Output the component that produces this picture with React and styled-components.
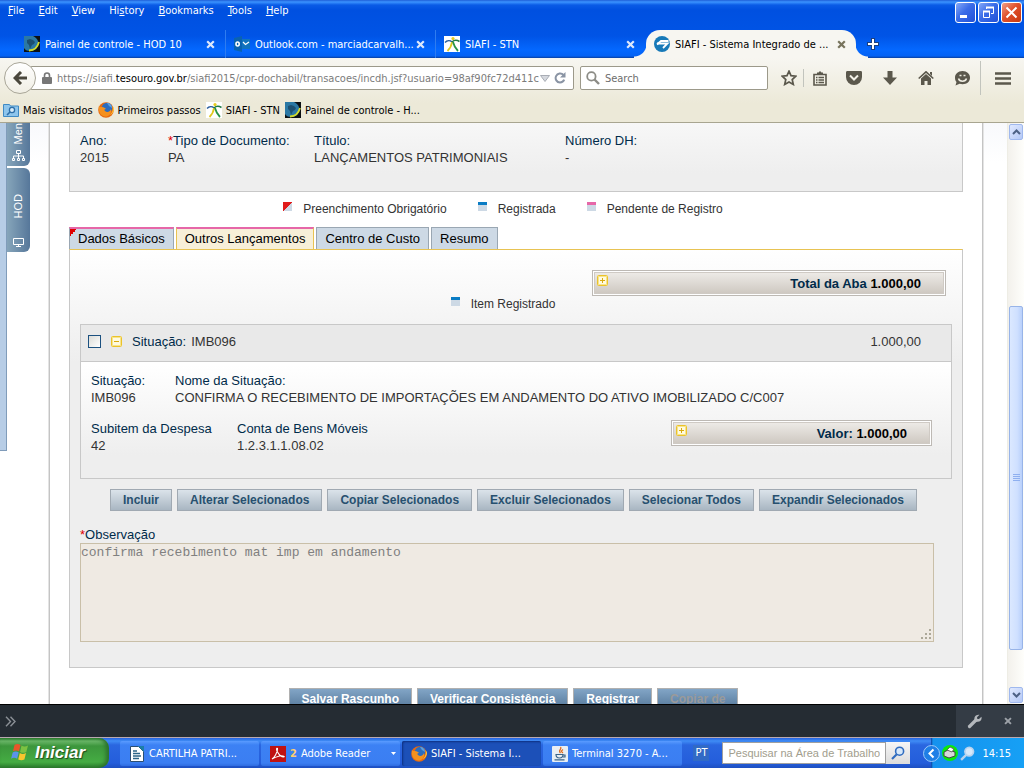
import React from 'react';
import styled, { createGlobalStyle, css } from 'styled-components';

const ui = '"DejaVu Sans Condensed", "Liberation Sans", sans-serif';
const arial = '"Liberation Sans", Arial, sans-serif';

const GlobalStyle = createGlobalStyle`
  * {
    box-sizing: border-box;
  }

  body {
    margin: 0;
    overflow: hidden;
    background: #fff;
    font-family: ${arial};
    font-size: 13px;
    line-height: 17px;
    color: #333;
  }

  button, input, textarea {
    margin: 0;
    font: inherit;
  }

  svg {
    display: block;
    flex: none;
  }
`;

const Window = styled.div`
  display: flex;
  flex-direction: column;
  height: 100vh;
`;

/* browser chrome */

const TitleBar = styled.header`
  flex: none;
  font-family: ${ui};
  font-size: 11px;
  color: #fff;
  background: linear-gradient(#1f5fd8 0, #3b93ff 2px, #0a5be6 5px, #0050e0 10px, #0054e6 36px, #0468ff 50px, #0462f4 56px, #0a3fa0 58px);
`;

const MenuRow = styled.div`
  display: flex;
  align-items: flex-start;
  height: 30px;
  padding: 2px 2px 0 8px;
`;

const MenuBar = styled.nav`
  display: flex;
  flex: 1;
  gap: 14px;
`;

const MenuItem = styled.button`
  padding: 0;
  border: 0;
  background: none;
  color: #fff;
  line-height: 17px;
`;

const WindowButtons = styled.div`
  display: flex;
  gap: 2px;
`;

const WindowButton = styled.button`
  display: flex;
  align-items: center;
  justify-content: center;
  width: 21px;
  height: 21px;
  padding: 0;
  border: 1px solid #fff;
  border-radius: 3px;
  background: ${p => p.$close
    ? 'linear-gradient(135deg, #f0a088, #e0502c 45%, #c83a10)'
    : 'linear-gradient(135deg, #84a8f8, #3a6ce8 45%, #2050d8)'};
`;

const TabRow = styled.div`
  display: flex;
  height: 28px;
  padding-left: 16px;
`;

const BrowserTab = styled.div`
  position: relative;
  display: flex;
  align-items: center;
  gap: 5px;
  flex: 0 1 210px;
  min-width: 0;
  padding: 0 10px 0 8px;
  border-right: 1px solid ${p => p.$last ? 'transparent' : '#2f7cf0'};

  ${p => p.$active && css`
    border: 0;
    border-radius: 14px 14px 0 0;
    background: #f7f6f1;
    color: #000;

    &::before, &::after {
      content: '';
      position: absolute;
      bottom: 0;
      width: 12px;
      height: 14px;
    }

    &::before {
      left: -12px;
      background: radial-gradient(circle at 0 0, transparent 12px, #f7f6f1 13px);
    }

    &::after {
      right: -12px;
      background: radial-gradient(circle at 100% 0, transparent 12px, #f7f6f1 13px);
    }
  `}
`;

const TabTitle = styled.span`
  flex: 1;
  min-width: 0;
  white-space: nowrap;
`;

const IconButton = styled.button`
  display: flex;
  align-items: center;
  align-self: center;
  justify-content: center;
  flex: none;
  width: ${p => p.$width || 10}px;
  height: 24px;
  padding: 0;
  border: 0;
  background: none;
  color: ${p => p.$color || 'inherit'};
`;

const Toolbars = styled.div`
  flex: none;
  font-family: ${ui};
  font-size: 11px;
  color: #000;
  background: linear-gradient(#f7f6f1, #ece9d8 45px);
  border-bottom: 1px solid #a8a590;
`;

const NavBar = styled.div`
  display: flex;
  align-items: center;
  height: 40px;
  padding-left: 4px;
  color: #5b584c;
`;

const BackButton = styled.button`
  display: flex;
  align-items: center;
  justify-content: center;
  z-index: 1;
  width: 32px;
  height: 32px;
  margin-right: -6px;
  padding: 0;
  border: 1px solid #a9a698;
  border-radius: 50%;
  background: linear-gradient(#fff, #f0eee4);
  color: #4a473c;
`;

const UrlBar = styled.div`
  display: flex;
  align-items: center;
  flex: 545 1 0;
  min-width: 0;
  height: 24px;
  padding: 0 3px 0 11px;
  border: 1px solid #9c998a;
  border-radius: 2px;
  background: #fff;
`;

const Url = styled.div`
  flex: 1;
  min-width: 0;
  margin: 0 1px 0 5px;
  overflow: hidden;
  white-space: nowrap;
  color: #7b7b7b;
  outline: 0;
`;

const Domain = styled.span`
  color: #000;
`;

const SearchBar = styled.label`
  display: flex;
  align-items: center;
  gap: 5px;
  flex: 187 1 0;
  min-width: 0;
  height: 24px;
  margin: 0 7px 0 6px;
  padding-left: 5px;
  border: 1px solid #9c998a;
  border-radius: 2px;
  background: #fff;
`;

const SearchInput = styled.input`
  flex: 1;
  min-width: 0;
  padding: 0;
  border: 0;
  outline: 0;
  background: none;

  &::placeholder {
    color: #6d6d6d;
    opacity: 1;
  }
`;

const Separator = styled.div`
  flex: none;
  width: 1px;
  height: ${p => p.$height}px;
  background: #c2c4bd;
`;

const Bookmarks = styled.nav`
  display: flex;
  align-items: center;
  gap: 5px;
  height: 24px;
  padding-left: 3px;
`;

const Bookmark = styled.a`
  display: flex;
  align-items: center;
  gap: 4px;
  color: #000;
  text-decoration: none;
  white-space: nowrap;
`;

/* page */

const Viewport = styled.div`
  display: flex;
  flex: 1;
  min-height: 0;
  overflow: hidden;
`;

const SideBar = styled.aside`
  display: flex;
  flex: none;
  width: 48px;
  background: linear-gradient(#f8f9fc, #fff 40px);
`;

const SideStrip = styled.div`
  width: 7px;
  height: 328px;
  border: 1px solid #809cba;
  border-width: 0 1px 1px 0;
  background: #b7cde6;
`;

const SideTabs = styled.div`
  display: flex;
  flex-direction: column;
  gap: 2px;
`;

const SideTab = styled.button`
  display: flex;
  flex-direction: column;
  align-items: center;
  justify-content: flex-end;
  gap: ${p => p.$gap}px;
  width: 23px;
  height: ${p => p.$height}px;
  padding: 0 0 5px;
  overflow: hidden;
  border: 0;
  border-radius: ${p => p.$cut ? '0 0 6px 0' : '0 6px 6px 0'};
  background: linear-gradient(90deg, #86a5ba, #56779a);
  color: #fff;
  font-size: 11px;
`;

const SideLabel = styled.span`
  writing-mode: vertical-rl;
  transform: rotate(180deg);
`;

const Page = styled.main`
  flex: 1;
  min-width: 0;
  padding: 0 19px;
  border: 1px solid #e4e4e4;
  border-width: 0 1px;
  box-shadow: inset 1px 0 #c4c4c4, inset -1px 0 #c4c4c4;
  padding: 0 20px;
`;

const DocPanel = styled.section`
  display: grid;
  grid-template-columns: 88px 146px 251px 1fr;
  height: 69px;
  padding: 9px 10px 0;
  border: 1px solid #c8c8c8;
  border-top: 0;
  background: linear-gradient(#f7f7f7, #eee 50px);
`;

const Label = styled.div`
  color: #002b4a;
`;

const Required = styled.span`
  color: #e00000;
`;

const Legend = styled.div`
  display: flex;
  justify-content: center;
  gap: 31px;
  padding-right: 26px;
  font-size: 12px;
`;

const PageLegend = styled(Legend)`
  height: 35px;
  padding-top: 9px;
`;

const PanelLegend = styled(Legend)`
  height: 16px;
  margin-bottom: 12px;
`;

const LegendItem = styled.div`
  display: flex;
  gap: 11px;
`;

const Mark = styled.i`
  width: 9px;
  height: 9px;
  margin-top: 1px;
  background: ${p => p.$corner
    ? 'linear-gradient(135deg, #e01b1b 50%, #cdd9e5 50%)'
    : `linear-gradient(${p.$color} 3px, #cdd9e5 3px)`};
`;

const FormTabs = styled.div`
  display: flex;
  gap: 2px;
  height: 22px;
`;

const FormTab = styled.button`
  position: relative;
  height: 22px;
  padding: 0 8px;
  border: 1px solid ${p => p.$active ? '#e8c352' : '#9aa7b3'};
  border-bottom: 0;
  border-top: ${p => p.$pending ? '2px solid #e667a8' : '1px solid #9aa7b3'};
  background: ${p => p.$active ? '#f7efd8' : '#cdd9e5'};
  color: #000;
  line-height: 18px;
  white-space: nowrap;
`;

const Corner = styled.i`
  position: absolute;
  top: 0;
  left: 0;
  width: 7px;
  height: 7px;
  background: linear-gradient(135deg, #e00000 50%, transparent 50%);
`;

const Panel = styled.section`
  height: 419px;
  padding: 20px 10px 0;
  border: 1px solid #c8c8c8;
  border-top-color: #e8c352;
  background: linear-gradient(#fff, #eee 112px);
`;

const AmountBox = styled.div`
  display: flex;
  flex: none;
  width: ${p => p.$width}px;
  height: 26px;
  margin-left: auto;
  margin-right: ${p => p.$right}px;
  padding: 1px;
  border: 1px solid #bdb9b4;
  background: #fff;
`;

const AmountInner = styled.div`
  display: flex;
  flex: 1;
  align-items: flex-start;
  justify-content: space-between;
  padding: 2px 22px 0 2px;
  border: 1px solid #cfcac4;
  background: linear-gradient(#edeae6, #cfc9c2);
  font-weight: bold;
  color: #000;
`;

const AmountLabel = styled.span`
  color: #002b4a;
`;

const Toggle = styled.button`
  display: flex;
  padding: 0;
  border: 0;
  background: none;
`;

const Item = styled.article`
  border: 1px solid #c8c8c8;
  background: linear-gradient(#fff 40px, #eee 130px);
`;

const ItemHeader = styled.div`
  display: flex;
  align-items: center;
  gap: 10px;
  height: 37px;
  padding: 0 30px 4px 7px;
  border-bottom: 1px solid #c8c8c8;
  background: #e9e9e9;
`;

const ItemTitle = styled.div`
  flex: 1;
  display: flex;
  gap: 5px;
`;

const Check = styled.input`
  appearance: none;
  width: 13px;
  height: 13px;
  border: 1px solid #1c5180;
  background: linear-gradient(135deg, #dcdcd7, #fff);
`;

const ItemBody = styled.div`
  display: flex;
  flex-direction: column;
  gap: 14px;
  padding: 10px 19px 24px 10px;
`;

const FieldRow = styled.div`
  display: flex;
`;

const Field = styled.div`
  min-width: ${p => p.$width || 0}px;
  white-space: nowrap;
`;

const ButtonRow = styled.div`
  display: flex;
  justify-content: center;
  gap: 5px;
  padding-right: 5px;
`;

const ItemActions = styled(ButtonRow)`
  margin: 10px 0 15px;
`;

const PageActions = styled(ButtonRow)`
  margin-top: 20px;
`;

const Button = styled.button`
  height: 22px;
  padding: 0 12px;
  border: 1px solid #a0a9b2;
  background: linear-gradient(#dbe3ea, #a9b6c2);
  color: #27506f;
  font-size: 12px;
  font-weight: bold;
  white-space: nowrap;
`;

const PrimaryButton = styled(Button)`
  border-color: #b0b0b0;
  background: linear-gradient(#82a5c6, #55789a);
  color: #fff;

  &:disabled {
    color: #9a9a9a;
  }
`;

const NoteLabel = styled.label`
  display: block;
  color: #002b4a;
`;

const Note = styled.textarea`
  display: block;
  width: calc(100% - 18px);
  height: 99px;
  padding: 0;
  border: 1px solid #c9bfa8;
  outline: 0;
  background: #efeae3;
  color: #808080;
  font-family: "Liberation Mono", "Courier New", monospace;
  font-size: 13px;
  line-height: 17px;
  resize: both;

  &::-webkit-resizer {
    background:
      linear-gradient(#aca899, #aca899) 11px 3px / 2px 2px no-repeat,
      linear-gradient(#aca899, #aca899) 7px 7px / 2px 2px no-repeat,
      linear-gradient(#aca899, #aca899) 11px 7px / 2px 2px no-repeat,
      linear-gradient(#aca899, #aca899) 3px 11px / 2px 2px no-repeat,
      linear-gradient(#aca899, #aca899) 7px 11px / 2px 2px no-repeat,
      linear-gradient(#aca899, #aca899) 11px 11px / 2px 2px no-repeat;
  }
`;

const Gutter = styled.div`
  flex: none;
  width: 23px;
  background: linear-gradient(#f8f9fc, #fff 40px);
`;

const ScrollBar = styled.div`
  display: flex;
  flex: none;
  flex-direction: column;
  width: 17px;
  padding: 1px 1px;
  border-left: 1px solid #eeede5;
  background: linear-gradient(90deg, #f3f1ec, #fefefb);
`;

const ScrollButton = styled.button`
  display: flex;
  align-items: center;
  justify-content: center;
  height: 16px;
  padding: 0;
  border: 1px solid #9fb8ee;
  border-radius: 2px;
  background: linear-gradient(135deg, #e0e9ff, #b4c8f6);
  color: #4d6185;
`;

const ScrollSpace = styled.div`
  flex: ${p => p.$grow} 1 0;
`;

const ScrollThumb = styled.div`
  display: flex;
  align-items: center;
  justify-content: center;
  flex: 343 1 0;
  border: 1px solid #98b4e8;
  border-radius: 2px;
  background: linear-gradient(90deg, #dbe8ff, #cfe0ff 60%, #b9d0fb);
`;

/* developer toolbar and taskbar */

const DevToolbar = styled.div`
  display: flex;
  flex: none;
  align-items: stretch;
  justify-content: space-between;
  height: 34px;
  border-top: 1px solid #000;
  border-bottom: 1px solid #b9a9b0;
  background: #252c33;
  color: #9da2a8;
`;

const DevTools = styled.div`
  display: flex;
  align-items: center;
  width: 68px;
  background: #343c45;
`;

const TaskBar = styled.footer`
  display: flex;
  align-items: stretch;
  flex: none;
  height: 30px;
  font-family: ${ui};
  font-size: 11px;
  color: #fff;
  background: linear-gradient(#2663e0, #3f8cf5 3px, #2a66e0 7px, #245ddb 25px, #1d4fc0);
`;

const StartButton = styled.button`
  display: flex;
  align-items: center;
  gap: 5px;
  width: 109px;
  margin-right: 11px;
  padding: 0 0 2px 11px;
  border: 0;
  border-radius: 0 10px 10px 0;
  background: linear-gradient(#2e8430, #6cb86a 3px, #3c963c 8px, #45ac43 24px, #2a7d2c);
  box-shadow: inset -3px 0 4px #2b6f2c;
  color: #fff;
  font-family: ${arial};
  font-size: 17px;
  font-style: italic;
  font-weight: bold;
  text-shadow: 1px 1px 1px #1e4a1e;
`;

const Tasks = styled.div`
  display: flex;
  flex: 1;
  gap: 2px;
  min-width: 0;
  padding: 3px 0 2px;
`;

const Task = styled.button`
  display: flex;
  align-items: center;
  gap: 4px;
  flex: 0 1 139px;
  min-width: 0;
  padding: 0 4px 0 9px;
  border: 0;
  border-radius: 2px;
  background: ${p => p.$active ? '#1c50b8' : 'linear-gradient(#5a9bff, #3c81f4 4px, #3b7ef2 22px, #2f6ce0)'};
  box-shadow: ${p => p.$active ? 'inset 1px 1px 2px #0e2f80' : 'none'};
  color: #fff;
  text-align: left;
`;

const TaskTitle = styled.span`
  flex: 1;
  overflow: hidden;
  white-space: nowrap;
`;

const TaskCount = styled.b`
  color: #ffcf70;
`;

const Language = styled.button`
  align-self: center;
  height: 16px;
  margin: 0 13px 0 7px;
  padding: 0 2px;
  border: 0;
  background: #316ac5;
  color: #fff;
  line-height: 16px;
`;

const DeskSearch = styled.form`
  display: flex;
  align-self: center;
  height: 22px;
  margin-right: 13px;
`;

const DeskInput = styled(SearchInput)`
  flex: none;
  width: 164px;
  padding: 0 5px;
  border: 1px solid #a0a0a0;
  background: #fff;
  font-family: ${arial};

  &::placeholder {
    color: #a19d8d;
  }
`;

const DeskButton = styled.button`
  display: flex;
  align-items: center;
  justify-content: center;
  width: 24px;
  padding: 0;
  border: 0;
  background: linear-gradient(#f6f6f6, #dcdcdc);
`;

const Tray = styled.div`
  display: flex;
  align-items: center;
  gap: 2px;
  padding-right: 13px;
  background: linear-gradient(90deg, transparent 8px, #0f3f9e 8px, #1592ee 10px, #16a0f5 100%);
`;

const Clock = styled.time`
  margin-left: 5px;
`;

/* drawings */

const Close = ({ size = 9 }) => (
  <svg width={size} height={size} viewBox="0 0 9 9">
    <path d="M1.2 1.2l6.6 6.6M7.8 1.2L1.2 7.8" stroke="currentColor" strokeWidth="2.2" />
  </svg>
);

const HodIcon = () => (
  <svg width="16" height="16" viewBox="0 0 16 16">
    <rect width="16" height="16" fill="#0c1014" />
    <path d="M0 0h9c4 2 6 5 5 9-1 4-4 6-8 6-3 0-5-1-6-3z" fill="#2b78a4" />
    <path d="M3 4l3-1 3 1 2 2-1 2-2 1-2 4-1-4-2-2z" fill="#1c4f70" />
    <path d="M5 14.500c5 0 8.500-3 10-8.500" fill="none" stroke="#d4dc2a" strokeWidth="1.800" />
  </svg>
);

const OutlookIcon = () => (
  <svg width="16" height="16" viewBox="0 0 16 16">
    <path d="M7 3h9v10H7z" fill="#1173bd" />
    <path d="M9 6l2.5 2.5L15 6" fill="none" stroke="#fff" strokeWidth="1.2" />
    <path d="M0 2l8-2v16l-8-2z" fill="#0a62b0" />
    <ellipse cx="3.6" cy="8" rx="1.6" ry="2" fill="none" stroke="#fff" strokeWidth="1.6" />
  </svg>
);

const StnIcon = () => (
  <svg width="16" height="16" viewBox="0 0 16 16">
    <rect width="16" height="16" fill="#fff" />
    <path d="M1 6.500c2-2 5-2.500 7-.5" fill="none" stroke="#2b5f9e" strokeWidth="1.400" />
    <path d="M8 6c2-2 5-2 7.500-.500" fill="none" stroke="#1f7a44" strokeWidth="1.600" />
    <path d="M8 6c-.5 4-2 6.500-4.500 9" fill="none" stroke="#e0c81c" strokeWidth="1.800" />
    <path d="M9 6c1 4 2.500 6.500 5 9" fill="none" stroke="#279447" strokeWidth="1.800" />
    <circle cx="9" cy="2.600" r="1.600" fill="#e8cc20" />
  </svg>
);

const SerproIcon = () => (
  <svg width="16" height="16" viewBox="0 0 16 16">
    <circle cx="8" cy="8" r="8" fill="#1779b8" />
    <path d="M14.500 5H7L3 8.500" fill="none" stroke="#fff" strokeWidth="1.800" />
    <path d="M3 7.500h10.500L9 12" fill="none" stroke="#fff" strokeWidth="1.800" />
  </svg>
);

const FirefoxIcon = () => (
  <svg width="16" height="16" viewBox="0 0 16 16">
    <circle cx="8" cy="8" r="7.8" fill="#e66a12" />
    <circle cx="9" cy="6" r="5.2" fill="#2a6cc0" />
    <path d="M9 1c3 0 5 2 5 5l-3-2z" fill="#5aa0e0" />
    <path d="M1 3c0 2 1 2 3 2 2 0 3 1 4 2-2 0-2 1-1 2 2 2 5 1 6-2 1 5-3 8-6 7.500C2 14 0 9 1 3z" fill="#f5911e" />
    <path d="M14.500 4c1 4 0 7-3 9 3-1 5-4 4.300-7z" fill="#ffcf3a" />
  </svg>
);

const FolderIcon = () => (
  <svg width="16" height="16" viewBox="0 0 16 16">
    <path d="M.5 2.500h6l1 1.500h8v10.500H.5z" fill="#8ec5ec" stroke="#3f8ac4" />
    <circle cx="9" cy="8" r="2.600" fill="#d8ecfa" stroke="#2f6fa8" strokeWidth="1.300" />
    <path d="M7 10l-3 3" stroke="#2f6fa8" strokeWidth="1.600" />
  </svg>
);

const Magnifier = ({ size = 14, color = '#8c8c86', flip }) => (
  <svg width={size} height={size} viewBox="0 0 14 14">
    {flip
      ? (
        <>
          <path d="M6 8l-5 5" stroke={color} strokeWidth="2.200" />
          <circle cx="8.600" cy="5.200" r="4" fill="#d6e8fa" stroke={color} strokeWidth="1.600" />
        </>
      )
      : (
        <>
          <circle cx="5.400" cy="5.400" r="4.200" fill="none" stroke={color} strokeWidth="1.800" />
          <path d="M8.500 8.500l4.500 4.500" stroke={color} strokeWidth="2.400" />
        </>
      )}
  </svg>
);

const Expand = ({ open }) => (
  <svg width="11" height="11" viewBox="0 0 11 11">
    <rect x=".5" y=".5" width="10" height="10" rx="1" fill="#fffbe0" stroke="#ebc32a" />
    <rect x="1.500" y="1.500" width="8" height="8" fill="none" stroke="#f7e48c" />
    <path d={open ? 'M3 5.500h5' : 'M3 5.500h5M5.500 3v5'} stroke="#d9aa10" />
  </svg>
);

const Chevron = ({ down }) => (
  <svg width="9" height="6" viewBox="0 0 9 6">
    <path d={down ? 'M1 1l3.500 3.500L8 1' : 'M1 5l3.500-3.500L8 5'} fill="none" stroke="currentColor" strokeWidth="2" />
  </svg>
);

const browserTabs = [
  { title: 'Painel de controle - HOD 10', icon: <HodIcon /> },
  { title: 'Outlook.com - marciadcarvalh...', icon: <OutlookIcon /> },
  { title: 'SIAFI - STN', icon: <StnIcon />, last: true },
  { title: 'SIAFI - Sistema Integrado de ...', icon: <SerproIcon />, active: true },
];

const bookmarks = [
  { title: 'Mais visitados', icon: <FolderIcon /> },
  { title: 'Primeiros passos', icon: <FirefoxIcon /> },
  { title: 'SIAFI - STN', icon: <StnIcon /> },
  { title: 'Painel de controle - H...', icon: <HodIcon /> },
];

const itemActions = [
  'Incluir',
  'Alterar Selecionados',
  'Copiar Selecionados',
  'Excluir Selecionados',
  'Selecionar Todos',
  'Expandir Selecionados',
];

const BrowserTitle = () => (
  <TitleBar>
    <MenuRow>
      <MenuBar>
        <MenuItem><u>F</u>ile</MenuItem>
        <MenuItem><u>E</u>dit</MenuItem>
        <MenuItem><u>V</u>iew</MenuItem>
        <MenuItem>Hi<u>s</u>tory</MenuItem>
        <MenuItem><u>B</u>ookmarks</MenuItem>
        <MenuItem><u>T</u>ools</MenuItem>
        <MenuItem><u>H</u>elp</MenuItem>
      </MenuBar>
      <WindowButtons>
        <WindowButton aria-label="Minimize">
          <svg width="13" height="13"><path d="M1 9h7v3H1z" fill="#fff" /></svg>
        </WindowButton>
        <WindowButton aria-label="Restore">
          <svg width="13" height="13" fill="none" stroke="#fff">
            <path d="M4.500 3V1.500h7v6H9" />
            <path d="M4 1.500h8" strokeWidth="2" />
            <path d="M1.500 5.500h6v6h-6z" />
            <path d="M1 5.500h7" strokeWidth="2" />
          </svg>
        </WindowButton>
        <WindowButton $close aria-label="Close">
          <svg width="13" height="13"><path d="M1.500 1.500l10 10M11.500 1.500l-10 10" stroke="#fff" strokeWidth="2" /></svg>
        </WindowButton>
      </WindowButtons>
    </MenuRow>
    <TabRow>
      {browserTabs.map(tab => (
        <BrowserTab key={tab.title} $active={tab.active} $last={tab.last}>
          {tab.icon}
          <TabTitle>{tab.title}</TabTitle>
          <IconButton aria-label="Close tab" $color={tab.active ? '#77735c' : '#dfe9fb'}><Close /></IconButton>
        </BrowserTab>
      ))}
      <IconButton $width={34} aria-label="New tab">
        <svg width="12" height="12" viewBox="0 0 12 12">
          <path d="M6 0v12M0 6h12" stroke="#1a3f80" strokeWidth="4" />
          <path d="M6 1v10M1 6h10" stroke="#fff" strokeWidth="2" />
        </svg>
      </IconButton>
    </TabRow>
  </TitleBar>
);

const BrowserBars = () => (
  <Toolbars>
    <NavBar>
      <BackButton aria-label="Back">
        <svg width="15" height="14" viewBox="0 0 15 14">
          <path d="M8 1L2 7l6 6M2.500 7H14" fill="none" stroke="currentColor" strokeWidth="3" />
        </svg>
      </BackButton>
      <UrlBar>
        <svg width="10" height="12" viewBox="0 0 10 12">
          <path d="M2.500 6V3.500a2.500 2.500 0 015 0V6" fill="none" stroke="#777" strokeWidth="1.600" />
          <rect y="5" width="10" height="7" rx="1" fill="#777" />
        </svg>
        <Url role="textbox" aria-label="Address" contentEditable suppressContentEditableWarning>
          https://siafi.<Domain>tesouro.gov.br</Domain>/siafi2015/cpr-dochabil/transacoes/incdh.jsf?usuario=98af90fc72d411c
        </Url>
        <svg width="10" height="7" viewBox="0 0 10 7"><path d="M.5.5h9L5 6.500z" fill="#d5d8de" stroke="#a9adb5" /></svg>
        <IconButton $width={20} aria-label="Reload">
          <svg width="12" height="12" viewBox="0 0 12 12">
            <path d="M9.500 3A4.500 4.500 0 106 10.500c2 0 3.500-1 4.200-2.800" fill="none" stroke="#8a94a4" strokeWidth="2" />
            <path d="M11.500 0v5.500H6z" fill="#8a94a4" />
          </svg>
        </IconButton>
      </UrlBar>
      <SearchBar>
        <Magnifier />
        <SearchInput placeholder="Search" aria-label="Search" />
      </SearchBar>
      <IconButton $width={28} aria-label="Bookmark this page">
        <svg width="16" height="16" viewBox="0 0 16 16">
          <path d="M8 1.200l2 4.500 4.800.5-3.600 3.300 1.100 4.900L8 11.900l-4.300 2.500 1.100-4.900L1.200 6.200 6 5.700z" fill="none" stroke="currentColor" strokeWidth="1.700" />
        </svg>
      </IconButton>
      <Separator $height={18} />
      <IconButton $width={32} aria-label="Bookmarks">
        <svg width="14" height="15" viewBox="0 0 14 15">
          <path d="M1 3.500h12V14H1z" fill="none" stroke="currentColor" strokeWidth="1.600" />
          <path d="M4 3V1.500h1.500L7 0l1.500 1.500H10V3z" fill="currentColor" />
          <path d="M3 6.500h1.500M5.500 6.500H11M3 9h1.500M5.500 9H11M3 11.500h1.500M5.500 11.500H11" stroke="currentColor" strokeWidth="1.300" />
        </svg>
      </IconButton>
      <IconButton $width={36} aria-label="Save to Pocket">
        <svg width="16" height="14" viewBox="0 0 16 14">
          <path d="M1.500 0h13C15.500 0 16 .5 16 1.500V6a8 8 0 01-16 0V1.500C0 .5.500 0 1.500 0z" fill="currentColor" />
          <path d="M4 4.500L8 8.500l4-4" fill="none" stroke="#f3f1e8" strokeWidth="2" />
        </svg>
      </IconButton>
      <IconButton $width={36} aria-label="Downloads">
        <svg width="14" height="14" viewBox="0 0 14 14">
          <path d="M4.500 0h5v6.500H14L7 14 0 6.500h4.500z" fill="currentColor" />
        </svg>
      </IconButton>
      <IconButton $width={36} aria-label="Home">
        <svg width="16" height="14" viewBox="0 0 16 14">
          <path d="M.7 7.500L8 .8l7.300 6.700" fill="none" stroke="currentColor" strokeWidth="1.600" />
          <path d="M12 1h2v4l-2-2z" fill="currentColor" />
          <path d="M3 7.500l5-4.600 5 4.600V14H9.500v-4h-3v4H3z" fill="currentColor" />
        </svg>
      </IconButton>
      <IconButton $width={36} aria-label="Start a conversation">
        <svg width="16" height="15" viewBox="0 0 16 15">
          <path d="M8.500 0C13 0 16 3 16 6.700s-3 6.500-7.500 6.500c-1 0-2-.2-2.900-.5L1.500 14.500 2.500 11C1.500 10 1 8.500 1 6.700 1 3 4 0 8.500 0z" fill="currentColor" />
          <path d="M4.500 7.500c1 3.500 7 3.500 8 0" fill="none" stroke="#efede2" strokeWidth="1.500" />
          <path d="M5.500 4.500h2M9.500 4.500h2" stroke="#efede2" strokeWidth="1.600" />
        </svg>
      </IconButton>
      <Separator $height={34} />
      <IconButton $width={43} aria-label="Open menu">
        <svg width="16" height="13" viewBox="0 0 16 13">
          <path d="M0 1.500h16M0 6.500h16M0 11.500h16" stroke="currentColor" strokeWidth="2.400" />
        </svg>
      </IconButton>
    </NavBar>
    <Bookmarks>
      {bookmarks.map(mark => (
        <Bookmark key={mark.title} href="#">{mark.icon}<span>{mark.title}</span></Bookmark>
      ))}
    </Bookmarks>
  </Toolbars>
);

const Amount = ({ label, width, right }) => (
  <AmountBox $width={width} $right={right}>
    <AmountInner>
      <Toggle aria-label="Expandir"><Expand /></Toggle>
      <span><AmountLabel>{label}</AmountLabel> 1.000,00</span>
    </AmountInner>
  </AmountBox>
);

const Launch = () => (
  <Item>
    <ItemHeader>
      <Check type="checkbox" aria-label="Selecionar IMB096" />
      <Toggle aria-label="Recolher"><Expand open /></Toggle>
      <ItemTitle><Label>Situação:</Label> IMB096</ItemTitle>
      <span>1.000,00</span>
    </ItemHeader>
    <ItemBody>
      <FieldRow>
        <Field $width={84}><Label>Situação:</Label>IMB096</Field>
        <Field>
          <Label>Nome da Situação:</Label>
          CONFIRMA O RECEBIMENTO DE IMPORTAÇÕES EM ANDAMENTO DO ATIVO IMOBILIZADO C/C007
        </Field>
      </FieldRow>
      <FieldRow>
        <Field $width={146}><Label>Subitem da Despesa</Label>42</Field>
        <Field><Label>Conta de Bens Móveis</Label>1.2.3.1.1.08.02</Field>
        <Amount label="Valor:" width={261} right={0} />
      </FieldRow>
    </ItemBody>
  </Item>
);

const Form = () => (
  <Page>
    <DocPanel>
      <Field><Label>Ano:</Label>2015</Field>
      <Field><Label><Required>*</Required>Tipo de Documento:</Label>PA</Field>
      <Field><Label>Título:</Label>LANÇAMENTOS PATRIMONIAIS</Field>
      <Field><Label>Número DH:</Label>-</Field>
    </DocPanel>
    <PageLegend>
      <LegendItem><Mark $corner />Preenchimento Obrigatório</LegendItem>
      <LegendItem><Mark $color="#0a7cc4" />Registrada</LegendItem>
      <LegendItem><Mark $color="#e667a8" />Pendente de Registro</LegendItem>
    </PageLegend>
    <FormTabs>
      <FormTab $pending><Corner />Dados Básicos</FormTab>
      <FormTab $pending $active>Outros Lançamentos</FormTab>
      <FormTab>Centro de Custo</FormTab>
      <FormTab>Resumo</FormTab>
    </FormTabs>
    <Panel>
      <Amount label="Total da Aba" width={354} right={6} />
      <PanelLegend>
        <LegendItem><Mark $color="#0a7cc4" />Item Registrado</LegendItem>
      </PanelLegend>
      <Launch />
      <ItemActions>
        {itemActions.map(action => <Button key={action}>{action}</Button>)}
      </ItemActions>
      <NoteLabel htmlFor="note"><Required>*</Required>Observação</NoteLabel>
      <Note id="note" readOnly value="confirma recebimento mat imp em andamento" />
    </Panel>
    <PageActions>
      <PrimaryButton>Salvar Rascunho</PrimaryButton>
      <PrimaryButton>Verificar Consistência</PrimaryButton>
      <PrimaryButton>Registrar</PrimaryButton>
      <PrimaryButton disabled>Copiar de</PrimaryButton>
    </PageActions>
  </Page>
);

const Side = () => (
  <SideBar>
    <SideStrip />
    <SideTabs>
      <SideTab $cut $height={43} $gap={5}>
        <SideLabel>Menu</SideLabel>
        <svg width="13" height="11" viewBox="0 0 13 11" fill="none" stroke="#fff">
          <path d="M4.500.5h4v3h-4zM.5 8.500h2v2h-2zM5.500 8.500h2v2h-2zM10.500 8.500h2v2h-2zM6.500 3.500v5M1.500 8V6h10v2" />
        </svg>
      </SideTab>
      <SideTab $height={84} $gap={20}>
        <SideLabel>HOD</SideLabel>
        <svg width="11" height="9" viewBox="0 0 11 9" fill="none" stroke="#fff">
          <path d="M.5.5h10v6H.5zM3 8.500h5M5.500 7v1" />
        </svg>
      </SideTab>
    </SideTabs>
  </SideBar>
);

const Scroll = () => (
  <ScrollBar>
    <ScrollButton aria-label="Scroll up"><Chevron /></ScrollButton>
    <ScrollSpace $grow={167} />
    <ScrollThumb>
      <svg width="7" height="8"><path d="M0 .5h7M0 2.500h7M0 4.500h7M0 6.500h7" stroke="#8fb0f0" /></svg>
    </ScrollThumb>
    <ScrollSpace $grow={37} />
    <ScrollButton aria-label="Scroll down"><Chevron down /></ScrollButton>
  </ScrollBar>
);

const Bottom = () => (
  <>
    <DevToolbar>
      <IconButton $width={20} aria-label="Expand toolbar">
        <svg width="11" height="11" viewBox="0 0 11 11">
          <path d="M1 .8l4.500 4.700L1 10.200M5.500.8L10 5.500l-4.500 4.700" fill="none" stroke="#8b9096" strokeWidth="1.400" />
        </svg>
      </IconButton>
      <DevTools>
        <IconButton $width={36} aria-label="Tools">
          <svg width="15" height="15" viewBox="0 0 15 15">
            <path d="M2.500 12.500L9 6" stroke="#b4b8bc" strokeWidth="3.200" strokeLinecap="round" />
            <path d="M12.500.8L10 3.200l.3 1.700 1.700.2 2.400-2.400c1 3-1.500 5.800-4.600 5C7.500 7 6.700 4.500 8 2.500 9 1 10.800.3 12.500.8z" fill="#b4b8bc" />
          </svg>
        </IconButton>
        <IconButton $width={32} aria-label="Close toolbar"><Close size={8} /></IconButton>
      </DevTools>
    </DevToolbar>
    <TaskBar>
      <StartButton>
        <svg width="19" height="18" viewBox="0 0 19 18">
          <path d="M3.500 2c2-1.300 4-1.300 6 0L8 8.300c-2-1.200-4-1.200-6 0z" fill="#e8562a" />
          <path d="M10.500 2.600c2 1.200 4 1.200 6.500 0l-1.700 6.300c-2 1.200-4 1.200-6.200 0z" fill="#7cc142" />
          <path d="M1.700 9.400c2-1.200 4-1.200 6 0l-1.600 6.300c-2-1.200-4-1.200-6 0z" fill="#5b93ea" />
          <path d="M8.800 10c2 1.200 4 1.200 6.200 0l-1.600 6.400c-2 1.100-4 1.100-6.200 0z" fill="#f8c62e" />
        </svg>
        Iniciar
      </StartButton>
      <Tasks>
        <Task>
          <svg width="16" height="16" viewBox="0 0 16 16">
            <path d="M1.500.5h8l5 5v10h-13z" fill="#fff" stroke="#2d4f72" />
            <path d="M9 0h6v6z" fill="#1c7ea8" />
            <path d="M4 5h4M4 7.500h7M4 10h8M4 12.500h6" stroke="#2c6486" strokeWidth="1.300" />
          </svg>
          <TaskTitle>CARTILHA PATRI...</TaskTitle>
        </Task>
        <Task>
          <svg width="16" height="16" viewBox="0 0 16 16">
            <rect width="16" height="16" fill="#c01212" />
            <path d="M2 13c2-1 6-7 5.500-10.500-1-1-1.500 1 0 3.500s4 5 6 5 0-2-4-1-6 2-7.500 3z" fill="none" stroke="#fff" strokeWidth="1.100" />
          </svg>
          <TaskCount>2</TaskCount>
          <TaskTitle>Adobe Reader</TaskTitle>
          <svg width="5" height="3"><path d="M0 0h5L2.500 3z" fill="#fff" /></svg>
        </Task>
        <Task $active><FirefoxIcon /><TaskTitle>SIAFI - Sistema I...</TaskTitle></Task>
        <Task>
          <svg width="16" height="16" viewBox="0 0 16 16">
            <rect width="16" height="16" rx="1" fill="#e9eef3" />
            <path d="M8.500 1c2 2-3 3 0 6M11 3.500c-2 1.500-2 2 0 3.500" fill="none" stroke="#e06a1c" strokeWidth="1.300" />
            <path d="M4 8.500h7c0 2-1 3.500-3.500 3.500S4 10.500 4 8.500zM11 9h2v2h-2M2.500 13.800h10" fill="none" stroke="#3a658c" strokeWidth="1.200" />
          </svg>
          <TaskTitle>Terminal 3270 - A...</TaskTitle>
        </Task>
      </Tasks>
      <Language>PT</Language>
      <DeskSearch>
        <DeskInput placeholder="Pesquisar na Área de Trabalho" aria-label="Pesquisar na Área de Trabalho" />
        <DeskButton type="button" aria-label="Pesquisar"><Magnifier color="#2f6cc0" flip /></DeskButton>
      </DeskSearch>
      <Tray>
        <IconButton $width={17} aria-label="Mostrar ícones">
          <svg width="17" height="17" viewBox="0 0 17 17">
            <circle cx="8.500" cy="8.500" r="8" fill="#1f7fe6" stroke="#9cc8f8" />
            <path d="M10.500 4.500l-4 4 4 4" fill="none" stroke="#fff" strokeWidth="2" />
          </svg>
        </IconButton>
        <svg width="16" height="16" viewBox="0 0 16 16">
          <circle cx="8" cy="8" r="8" fill="#0bea0b" />
          <path d="M2 7l4-2 7 2v4l-6 2-5-2z" fill="#d8d8d8" stroke="#444" />
          <path d="M5 5l3-3 4 2-2 3z" fill="#fff" stroke="#666" />
        </svg>
        <Magnifier size={15} color="#b9d3ee" flip />
        <Clock>14:15</Clock>
      </Tray>
    </TaskBar>
  </>
);

export default function App () {
  return (
    <Window>
      <GlobalStyle />
      <BrowserTitle />
      <BrowserBars />
      <Viewport>
        <Side />
        <Form />
        <Gutter />
        <Scroll />
      </Viewport>
      <Bottom />
    </Window>
  );
}
